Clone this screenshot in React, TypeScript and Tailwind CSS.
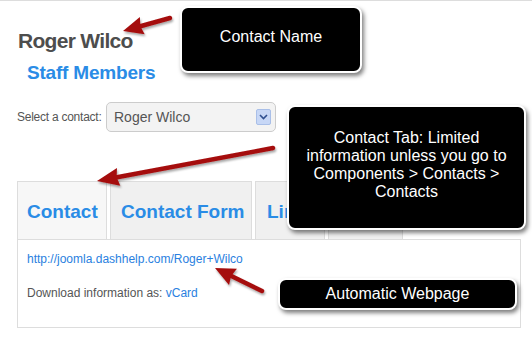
import React from "react";

const F = { fontFamily: '"Liberation Sans", Arial, sans-serif' };

function Callout({ className, children }: { className: string; children: React.ReactNode }) {
  return (
    <div
      className={`absolute bg-black text-white border-2 border-white rounded-lg shadow-[2px_3px_4px_rgba(0,0,0,0.5)] text-[16px] leading-[18px] text-center flex items-center justify-center ${className}`}
    >
      {children}
    </div>
  );
}

function Arrow({ tail, tip, hl = 20, hw = 9 }: { tail: [number, number]; tip: [number, number]; hl?: number; hw?: number }) {
  const dx = tip[0] - tail[0];
  const dy = tip[1] - tail[1];
  const len = Math.hypot(dx, dy);
  const ux = dx / len;
  const uy = dy / len;
  const bx = tip[0] - hl * ux;
  const by = tip[1] - hl * uy;
  const nx = -uy;
  const ny = ux;
  const pts = `${tip[0]},${tip[1]} ${bx + hw * nx},${by + hw * ny} ${bx + 2 * ux},${by + 2 * uy} ${bx - hw * nx},${by - hw * ny}`;
  return (
    <g filter="url(#sh)">
      <line x1={tail[0]} y1={tail[1]} x2={bx + 3 * ux} y2={by + 3 * uy} stroke="#a50e0e" strokeWidth={4.5} strokeLinecap="round" />
      <polygon points={pts} fill="#a50e0e" />
    </g>
  );
}

export default function App() {
  return (
    <div className="relative w-[532px] h-[342px] bg-white overflow-hidden border-t border-[#dddddd]" style={F}>
      <div className="flex flex-col">
        <div className="mt-[28px] ml-[18px] text-[21px] leading-[24px] font-bold text-[#4d4d4d] tracking-[-0.7px]">Roger Wilco</div>
        <div className="mt-[9px] ml-[27px] text-[19px] leading-[22px] font-bold text-[#2a8ce6] tracking-[-0.2px]">Staff Members</div>
        <div className="mt-[18px] ml-[17px] flex items-center h-[30px]">
          <span className="text-[12px] text-[#555] tracking-[-0.25px] w-[89px]">Select a contact:</span>
          <div className="w-[170px] h-[30px] rounded-[5px] border border-[#cccccc] bg-[#f3f3f3] flex items-center justify-between pl-[7px] pr-[4px]">
            <span className="text-[14px] text-[#555]">Roger Wilco</span>
            <div className="w-[15px] h-[16px] rounded-[2px] bg-[#c7d7f6] border border-[#a9bfe8] flex items-center justify-center">
              <svg width="9" height="6" viewBox="0 0 9 6">
                <path d="M1 1 L4.5 4.5 L8 1" stroke="#2f4f8f" strokeWidth="1.6" fill="none" />
              </svg>
            </div>
          </div>
        </div>
        <div className="mt-[49px] ml-[17px] flex gap-[3px] h-[58px]">
          <div className="w-[90px] border border-b-0 border-[#dddddd] bg-[#f7f7f7] flex items-center pt-[4px] pl-[9px] text-[19px] font-bold text-[#2a8ce6]">Contact</div>
          <div className="w-[142px] border border-b-0 border-[#dddddd] bg-[#f0f0f0] flex items-center pt-[4px] pl-[10px] text-[19px] font-bold text-[#2a8ce6]">Contact Form</div>
          <div className="w-[70px] border border-b-0 border-[#dddddd] bg-[#f0f0f0] flex items-center pt-[4px] pl-[11px] text-[19px] font-bold text-[#2a8ce6] overflow-hidden whitespace-nowrap">Links</div>
          <div className="w-[75px] border border-b-0 border-[#dddddd] bg-[#f0f0f0] flex items-center pt-[4px] pl-[10px] text-[19px] font-bold text-[#2a8ce6] overflow-hidden whitespace-nowrap">Profile</div>
        </div>
        <div className="ml-[17px] w-[504px] h-[89px] border border-[#dddddd] pt-[12px] pl-[9px] text-[12px] leading-[14px]">
          <div className="text-[#2a7fe0]">http://joomla.dashhelp.com/Roger+Wilco</div>
          <div className="mt-[20px] text-[#555]">
            Download information as: <span className="text-[#2a7fe0]">vCard</span>
          </div>
        </div>
      </div>

      <Callout className="left-[180px] top-[5px] w-[182px] h-[67px] pb-[5px]">Contact Name</Callout>
      <Callout className="left-[287px] top-[104px] w-[239px] h-[125px] px-[10px] pb-[5px]">
        <div>
          Contact Tab: Limited
          <br />
          information unless you go to
          <br />
          Components &gt; Contacts &gt;
          <br />
          Contacts
        </div>
      </Callout>
      <Callout className="left-[278px] top-[277px] w-[239px] h-[32px]">Automatic Webpage</Callout>

      <svg className="absolute left-0 top-0 pointer-events-none" width="532" height="342">
        <defs>
          <filter id="sh" x="-20%" y="-50%" width="140%" height="200%">
            <feDropShadow dx="1" dy="2" stdDeviation="1.2" floodColor="#000" floodOpacity="0.35" />
          </filter>
        </defs>
        <Arrow tail={[170, 17]} tip={[123, 30]} />
        <Arrow tail={[273, 147]} tip={[97, 180]} hl={22} />
        <Arrow tail={[262, 290]} tip={[215, 267]} />
      </svg>
    </div>
  );
}
